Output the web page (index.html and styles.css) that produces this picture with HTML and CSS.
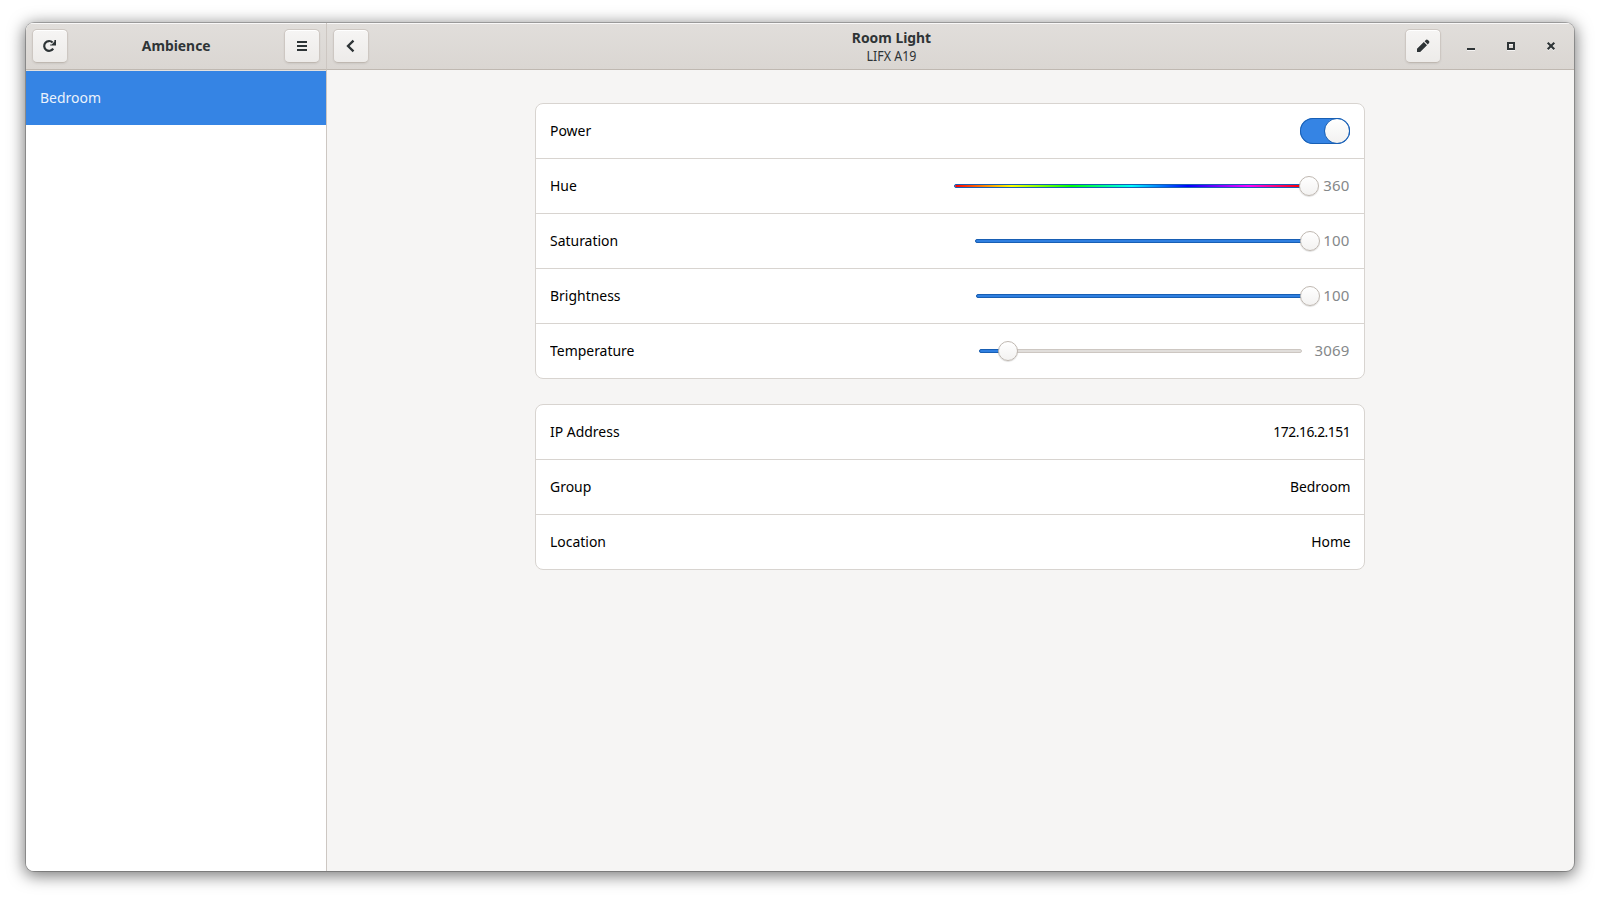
FILE: index.html
```html
<!DOCTYPE html>
<html lang="en">
<head>
<meta charset="utf-8">
<title>Ambience</title>
<link rel="stylesheet" href="styles.css">
</head>
<body>
<div class="window">
  <aside class="sidebar">
    <header class="headerbar side-header">
      <button class="btn" aria-label="Refresh"><svg width="16" height="16" viewBox="0 0 16 16"><path d="M10.600 4.500A4.900 4.900 0 1 0 11.200 10.600" fill="none" stroke="#2e3436" stroke-width="2.200"/><path d="M14 2v5.600H8.200V6.400h1.600L12.400 3.400V2z" fill="#2e3436"/></svg></button>
      <h1 class="title">Ambience</h1>
      <button class="btn" aria-label="Menu"><svg width="16" height="16" viewBox="0 0 16 16"><path d="M3 3h10v2H3zM3 7h10v2H3zM3 11h10v2H3z" fill="#2e3436"/></svg></button>
    </header>
    <div class="group-row"><span class="label">Bedroom</span></div>
  </aside>
  <main class="content">
    <header class="headerbar main-header">
      <button class="btn" aria-label="Back"><svg width="16" height="16" viewBox="0 0 16 16"><path d="M10.500 2.600 5 8l5.500 5.400" fill="none" stroke="#2e3436" stroke-width="2.300"/></svg></button>
      <div class="titles"><h2 class="title">Room Light</h2><div class="subtitle">LIFX A19</div></div>
      <div class="controls">
        <button class="btn" aria-label="Edit"><svg width="16" height="16" viewBox="0 0 16 16"><path d="M2 14v-3.200L8.800 4 12 7.200 5.200 14zM9.600 3.200l1.300-1.300q1-.8 2 .1l1.100 1.100q.9 1 0 2L12.800 6.400z" fill="#2e3436"/></svg></button>
        <svg class="wm" width="16" height="16" viewBox="0 0 16 16"><path d="M4 12h8v1H4z" fill="#fff" opacity=".7"/><path d="M4 10h8v2H4z" fill="#2e3436"/></svg>
        <svg class="wm" width="16" height="16" viewBox="0 0 16 16"><path d="M4 12h8v1H4zM6 6h4v1H6z" fill="#fff" opacity=".7"/><path d="M5 5h6v6H5z" fill="none" stroke="#2e3436" stroke-width="2"/></svg>
        <svg class="wm" width="16" height="16" viewBox="0 0 16 16"><path d="M4.700 5.700l6.600 6.600m0-6.600-6.600 6.600" stroke="#fff" stroke-opacity=".6" stroke-width="2"/><path d="M4.700 4.700l6.600 6.600m0-6.600-6.600 6.600" stroke="#2e3436" stroke-width="2.100"/></svg>
      </div>
    </header>
    <div class="page">
      <section class="card">
        <div class="row"><span class="label">Power</span><div class="switch"><div class="knob"></div></div></div>
        <div class="row"><span class="label">Hue</span><div class="scale hue"><div class="fill"></div><div class="thumb"></div></div><span class="value">360</span></div>
        <div class="row"><span class="label">Saturation</span><div class="scale saturation"><div class="fill"></div><div class="thumb"></div></div><span class="value">100</span></div>
        <div class="row"><span class="label">Brightness</span><div class="scale brightness"><div class="fill"></div><div class="thumb"></div></div><span class="value">100</span></div>
        <div class="row"><span class="label">Temperature</span><div class="scale temperature"><div class="fill"></div><div class="thumb"></div></div><span class="value">3069</span></div>
      </section>
      <section class="card">
        <div class="row"><span class="label">IP Address</span><span class="label detail ip">172.16.2.151</span></div>
        <div class="row"><span class="label">Group</span><span class="label detail">Bedroom</span></div>
        <div class="row"><span class="label">Location</span><span class="label detail">Home</span></div>
      </section>
    </div>
  </main>
</div>
</body>
</html>
```
FILE: styles.css
```css
* { box-sizing: border-box; }
body {
  margin: 0;
  height: 900px;
  padding: 23px 26px 29px;
  overflow: hidden;
  background: #fff;
  font: 15px/20px "Noto Sans", sans-serif;
  color: #000;
}
.window {
  display: flex;
  width: 1548px;
  height: 848px;
  border-radius: 8px;
  background: #f6f5f4;
  box-shadow: 0 0 0 1px rgba(0, 0, 0, .23), 0 3px 16px 2px rgba(0, 0, 0, .52);
  overflow: hidden;
}
.sidebar { width: 301px; background: #fff; border-right: 1px solid #cdc7c2; }
.content { flex: 1; }
.headerbar {
  display: flex;
  align-items: center;
  justify-content: space-between;
  height: 47px;
  padding: 0 7px 1px;
  border-bottom: 1px solid #bfb8b1;
  background: linear-gradient(#e1dedb, #dad6d2);
  box-shadow: inset 0 1px #f9f8f8;
}
.side-header { margin-right: -1px; border-right: 1px solid #cdc7c2; }
.side-header .title { padding-bottom: 2px; }
.main-header { position: relative; padding-right: 15px; }
.btn {
  display: flex;
  align-items: center;
  justify-content: center;
  width: 36px;
  height: 34px;
  margin: 0 -1px;
  padding: 0;
  border: 1px solid #cdc7c2;
  border-bottom-color: #bfb8b1;
  border-radius: 5px;
  background: linear-gradient(#f6f5f4, #edebe9);
  box-shadow: inset 0 1px #fff, 0 1px 2px rgba(0, 0, 0, .07);
}
.title { margin: 0; font-size: 15px; line-height: 20px; font-weight: 700; color: #2e3436; transform: scaleX(.925); }
.titles { position: absolute; left: 0; right: 118px; top: 5px; text-align: center; color: #2e3436; }
.titles .title { line-height: 19px; }
.subtitle { font-size: 13.5px; line-height: 18px; transform: scaleX(.92); }
.controls { display: flex; align-items: center; }
.controls .btn { margin-right: 22px; }
.wm { margin-right: 24px; }
.wm:last-child { margin-right: 0; }
.group-row {
  height: 55px;
  padding: 16px 14px;
  border-top: 1px solid #e4e1de;
  background: #3584e4;
  color: #fff;
}
.group-row .label { opacity: .9; }
.page { display: flex; flex-direction: column; align-items: center; gap: 25px; padding: 33px 2px 0 0; }
.card { width: 830px; border: 1px solid #d8d4d0; border-radius: 8px; background: #fff; overflow: hidden; }
.row { display: flex; align-items: center; justify-content: space-between; height: 55px; padding: 0 14px; }
.row + .row { border-top: 1px solid #d8d4d0; }
.row:first-child { height: 54px; }
.label { display: inline-block; transform: scaleX(.93); transform-origin: left; }
.row .label, .value { padding-bottom: 2px; }
.row .detail { margin-right: -1px; transform: scaleX(.925); transform-origin: right; }
.ip { letter-spacing: -.5px; }
.switch {
  display: flex;
  justify-content: flex-end;
  width: 50px;
  height: 26px;
  border-radius: 13px;
  background: #3584e4;
  box-shadow: inset 0 0 0 1px #185fb4;
}
.knob { width: 26px; height: 26px; border: 1px solid #185fb4; border-radius: 50%; background: linear-gradient(#fff, #f2f1f0); }
.scale {
  display: flex;
  align-items: center;
  height: 4px;
  margin-left: auto;
  border: 1px solid #cdc7c2;
  border-radius: 2px;
  background: #e1dedb;
}
.fill { height: 4px; flex: none; margin-left: -1px; border: 1px solid #185fb4; border-radius: 2px; background: #2f7fe0; }
.thumb {
  flex: none;
  width: 20px;
  height: 20px;
  margin-left: -10px;
  border: 1px solid #bfb8b1;
  border-radius: 50%;
  background: linear-gradient(#fff, #f3f2f1);
  box-shadow: 0 1px 1px rgba(0, 0, 0, .13);
}
.hue { width: 355px; }
.hue .fill { width: 355px; background: linear-gradient(90deg, red, #ff0 16%, lime 33%, cyan 50%, blue 66%, magenta 83%, red 98%) padding-box; }
.saturation { width: 335px; }
.saturation .fill { width: 335px; }
.brightness { width: 334px; }
.brightness .fill { width: 334px; }
.temperature { width: 323px; }
.temperature .fill { width: 29px; }
.value { margin-left: 14px; color: #85888a; letter-spacing: .2px; }
.saturation + .value, .brightness + .value { margin-left: 13px; }
.temperature + .value { margin-left: 12px; }
```
